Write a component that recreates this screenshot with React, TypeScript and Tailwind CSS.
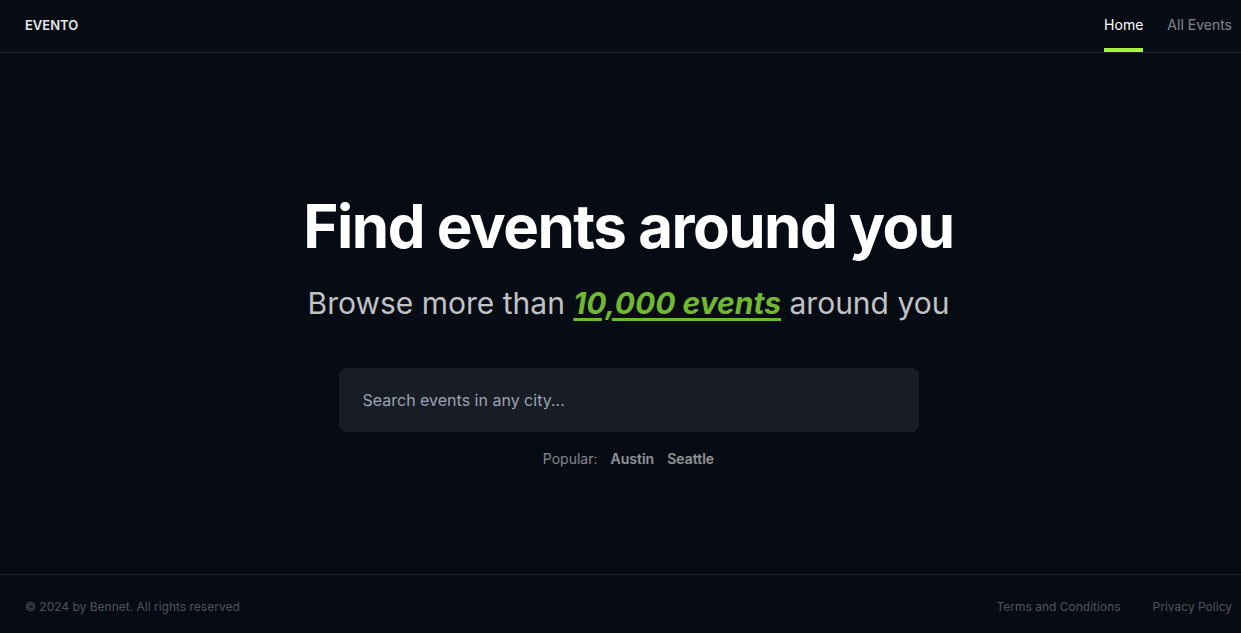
import React from 'react'

const popular = ['Austin', 'Seattle']

export default function App() {
  return (
    <div className="w-full h-[633px] overflow-hidden bg-[#070b14]">
      <div className="w-[1257px] h-full flex flex-col text-white font-['Inter',sans-serif]">
        {/* Header */}
        <header className="h-[53px] flex items-center justify-between px-[25px] border-b border-white/10">
          <span className="text-[13px] font-semibold text-white/90">EVENTO</span>
          <nav className="flex h-full items-center gap-6 text-sm">
            <a href="#" className="relative h-full flex items-center text-white pb-[3px]">
              Home
              <span className="absolute left-0 right-0 bottom-0 h-[4px] bg-[#a4f63a]" />
            </a>
            <a href="#" className="text-white/50 pb-[3px]">All Events</a>
          </nav>
        </header>

        {/* Hero */}
        <main className="flex-1 flex flex-col items-center pt-[143px]">
          <h1 className="text-6xl leading-none font-bold tracking-tight">Find events around you</h1>
          <p className="mt-[32px] text-3xl leading-none text-white/75">
            Browse more than{' '}
            <span className="font-bold italic underline text-[#6fb82f] decoration-[3px] underline-offset-4">10,000 events</span>{' '}
            around you
          </p>

          <input
            type="text"
            placeholder="Search events in any city..."
            className="mt-[50px] w-[580px] h-[64px] rounded-lg bg-white/[0.07] px-6 text-base text-white outline-none placeholder:text-[#9aa3b5]"
          />

          <div className="mt-[17px] flex items-center gap-[13px] text-sm text-white/50">
            <span>Popular:</span>
            <div className="flex gap-[13px] font-semibold text-white/55">
              {popular.map((city) => (
                <button key={city}>{city}</button>
              ))}
            </div>
          </div>
        </main>

        {/* Footer */}
        <footer className="h-[59px] flex items-center justify-between px-[25px] pt-[6px] border-t border-white/10 text-xs text-white/30">
          <small className="text-xs">© 2024 by Bennet. All rights reserved</small>
          <ul className="flex gap-8">
            <li>Terms and Conditions</li>
            <li>Privacy Policy</li>
          </ul>
        </footer>
      </div>
    </div>
  )
}
